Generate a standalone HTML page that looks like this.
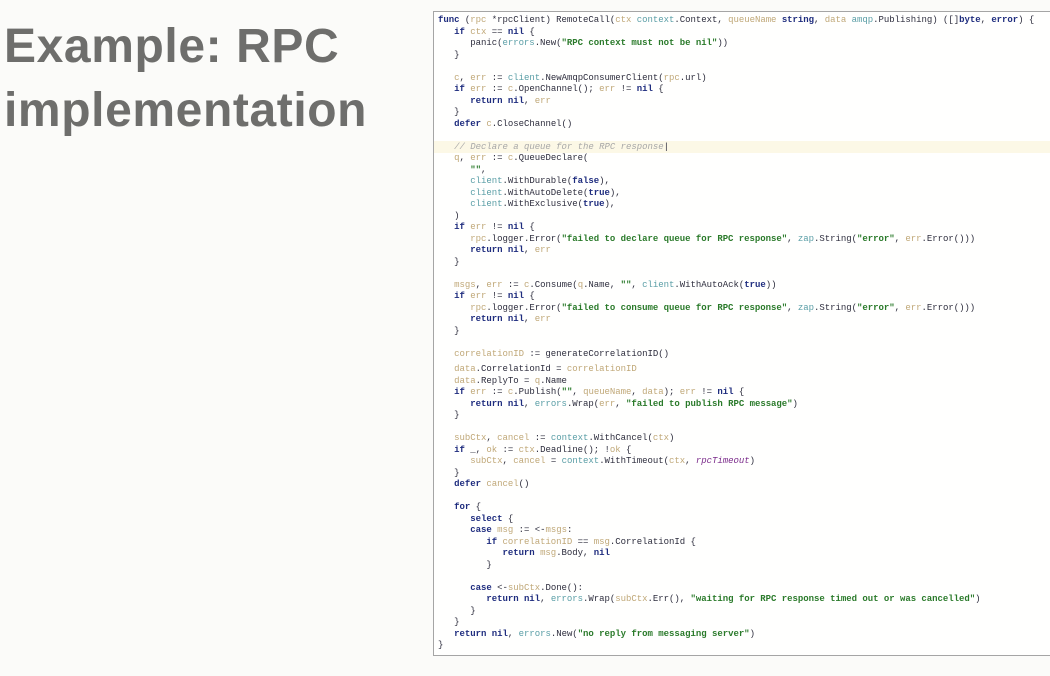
<!DOCTYPE html>
<html><head><meta charset="utf-8"><style>
body{margin:0;width:1050px;height:676px;background:#fbfbf9;overflow:hidden;position:relative;font-family:"Liberation Sans",sans-serif}
h1{position:absolute;left:4px;top:15px;margin:0;font-size:48px;line-height:64px;font-weight:bold;color:#6e6e6c;letter-spacing:0.6px}
.box{position:absolute;left:433px;top:11px;width:640px;height:643px;border:1.5px solid #a5a5a5;background:#fffffe}
pre{position:absolute;left:4px;top:3px;margin:0;font-family:"Liberation Mono",monospace;font-size:9px;line-height:11.5px;color:#2e2e3e;letter-spacing:-0.03px}
.k{color:#1e2c7e;font-weight:bold}.s{color:#2a7a2a;font-weight:bold}.v{color:#c0a878}.p{color:#5a9ea6}.c{color:#a8a8a8;font-style:italic}.i{color:#7a2a8a;font-style:italic}
.hl{position:absolute;left:0;top:129px;width:640px;height:12px;background:#fcf8e6}
.g{display:block;height:4px}
</style></head><body>
<h1>Example: RPC<br>implementation</h1>
<div class="box"><div class="hl"></div>
<pre><span class="k">func</span> (<span class="v">rpc</span> *rpcClient) RemoteCall(<span class="v">ctx</span> <span class="p">context</span>.Context, <span class="v">queueName</span> <span class="k">string</span>, <span class="v">data</span> <span class="p">amqp</span>.Publishing) ([]<span class="k">byte</span>, <span class="k">error</span>) {
   <span class="k">if</span> <span class="v">ctx</span> == <span class="k">nil</span> {
      panic(<span class="p">errors</span>.New(<span class="s">"RPC context must not be nil"</span>))
   }

   <span class="v">c</span>, <span class="v">err</span> := <span class="p">client</span>.NewAmqpConsumerClient(<span class="v">rpc</span>.url)
   <span class="k">if</span> <span class="v">err</span> := <span class="v">c</span>.OpenChannel(); <span class="v">err</span> != <span class="k">nil</span> {
      <span class="k">return nil</span>, <span class="v">err</span>
   }
   <span class="k">defer</span> <span class="v">c</span>.CloseChannel()

   <span class="c">// Declare a queue for the RPC response</span>|
   <span class="v">q</span>, <span class="v">err</span> := <span class="v">c</span>.QueueDeclare(
      <span class="s">""</span>,
      <span class="p">client</span>.WithDurable(<span class="k">false</span>),
      <span class="p">client</span>.WithAutoDelete(<span class="k">true</span>),
      <span class="p">client</span>.WithExclusive(<span class="k">true</span>),
   )
   <span class="k">if</span> <span class="v">err</span> != <span class="k">nil</span> {
      <span class="v">rpc</span>.logger.Error(<span class="s">"failed to declare queue for RPC response"</span>, <span class="p">zap</span>.String(<span class="s">"error"</span>, <span class="v">err</span>.Error()))
      <span class="k">return nil</span>, <span class="v">err</span>
   }

   <span class="v">msgs</span>, <span class="v">err</span> := <span class="v">c</span>.Consume(<span class="v">q</span>.Name, <span class="s">""</span>, <span class="p">client</span>.WithAutoAck(<span class="k">true</span>))
   <span class="k">if</span> <span class="v">err</span> != <span class="k">nil</span> {
      <span class="v">rpc</span>.logger.Error(<span class="s">"failed to consume queue for RPC response"</span>, <span class="p">zap</span>.String(<span class="s">"error"</span>, <span class="v">err</span>.Error()))
      <span class="k">return nil</span>, <span class="v">err</span>
   }

   <span class="v">correlationID</span> := generateCorrelationID()
<span class="g"></span>   <span class="v">data</span>.CorrelationId = <span class="v">correlationID</span>
   <span class="v">data</span>.ReplyTo = <span class="v">q</span>.Name
   <span class="k">if</span> <span class="v">err</span> := <span class="v">c</span>.Publish(<span class="s">""</span>, <span class="v">queueName</span>, <span class="v">data</span>); <span class="v">err</span> != <span class="k">nil</span> {
      <span class="k">return nil</span>, <span class="p">errors</span>.Wrap(<span class="v">err</span>, <span class="s">"failed to publish RPC message"</span>)
   }

   <span class="v">subCtx</span>, <span class="v">cancel</span> := <span class="p">context</span>.WithCancel(<span class="v">ctx</span>)
   <span class="k">if</span> _, <span class="v">ok</span> := <span class="v">ctx</span>.Deadline(); !<span class="v">ok</span> {
      <span class="v">subCtx</span>, <span class="v">cancel</span> = <span class="p">context</span>.WithTimeout(<span class="v">ctx</span>, <span class="i">rpcTimeout</span>)
   }
   <span class="k">defer</span> <span class="v">cancel</span>()

   <span class="k">for</span> {
      <span class="k">select</span> {
      <span class="k">case</span> <span class="v">msg</span> := &lt;-<span class="v">msgs</span>:
         <span class="k">if</span> <span class="v">correlationID</span> == <span class="v">msg</span>.CorrelationId {
            <span class="k">return</span> <span class="v">msg</span>.Body, <span class="k">nil</span>
         }

      <span class="k">case</span> &lt;-<span class="v">subCtx</span>.Done():
         <span class="k">return nil</span>, <span class="p">errors</span>.Wrap(<span class="v">subCtx</span>.Err(), <span class="s">"waiting for RPC response timed out or was cancelled"</span>)
      }
   }
   <span class="k">return nil</span>, <span class="p">errors</span>.New(<span class="s">"no reply from messaging server"</span>)
}</pre></div>
</body></html>
